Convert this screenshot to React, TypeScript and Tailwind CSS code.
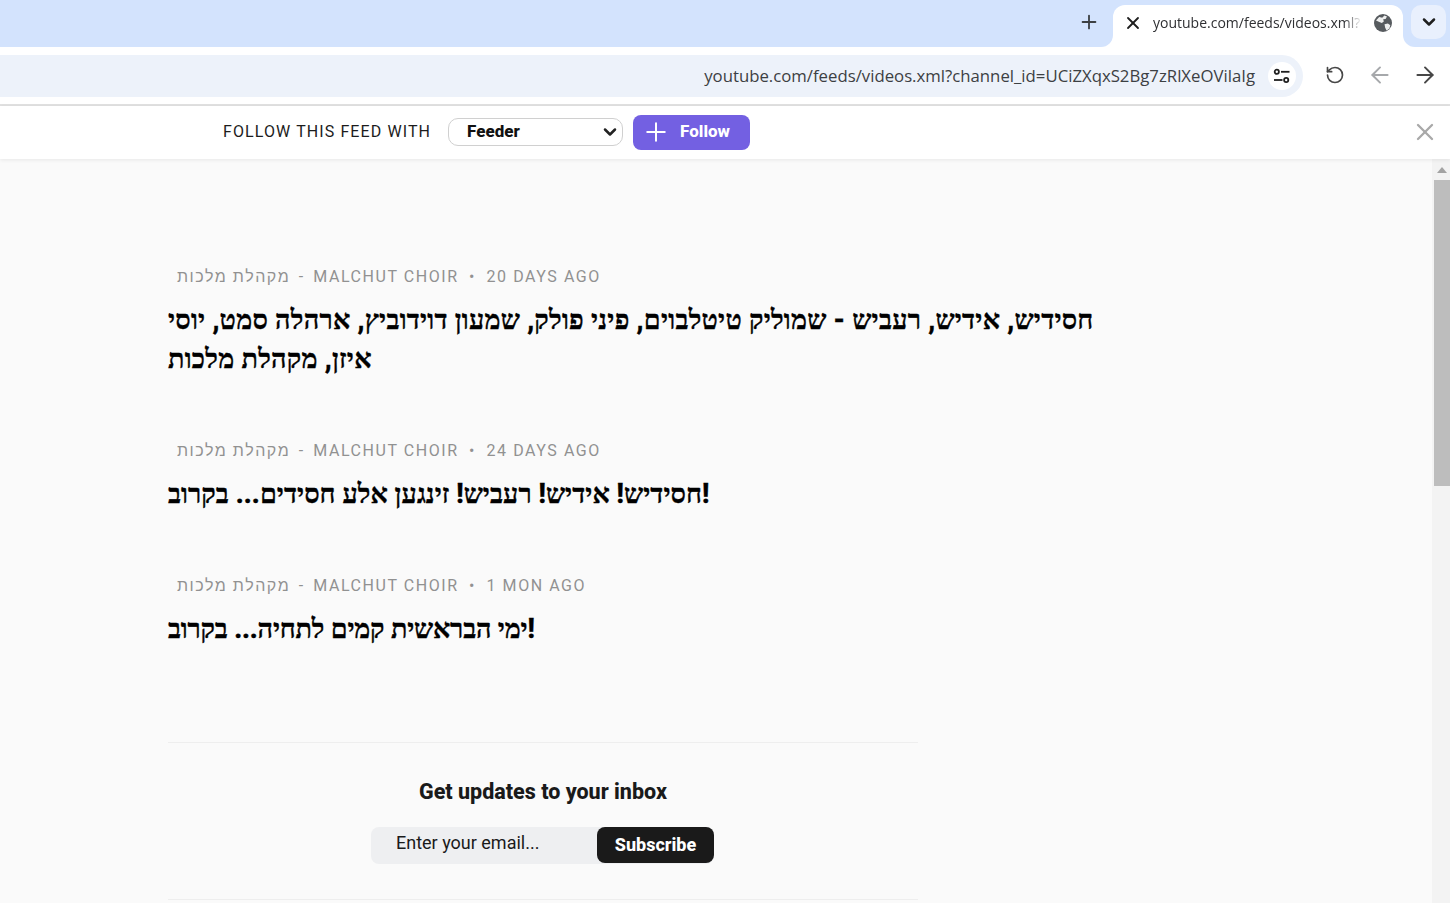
import { ArrowLeft, ArrowRight, ChevronDown, Plus, RotateCcw, X } from "lucide-react";

const ITEMS = [
  {
    age: "20 days ago",
    title:
      "חסידיש, אידיש, רעביש - שמוליק טיטלבוים, פיני פולק, שמעון דוידוביץ, ארהלה סמט, יוסי איזן, מקהלת מלכות",
    gap: "mb-[60px]",
    spacing: "tracking-[0.25px]",
  },
  {
    age: "24 days ago",
    title: "חסידיש! אידיש! רעביש! זינגען אלע חסידים... בקרוב!",
    gap: "mb-[60px]",
    spacing: "tracking-[0.06px]",
  },
  {
    age: "1 mon ago",
    title: "ימי הבראשית קמים לתחיה... בקרוב!",
    gap: "mb-0",
    spacing: "tracking-[-0.2px]",
  },
];

const TuneIcon = () => (
  <svg width="18" height="16" viewBox="0 0 18 16" fill="none" stroke="#1f1f1f" strokeWidth="1.8">
    <circle cx="3.8" cy="3.8" r="2.1" />
    <path d="M8 3.8h8.5" />
    <circle cx="13.2" cy="12" r="2.1" />
    <path d="M1 12h8.5" />
  </svg>
);

const GlobeIcon = () => (
  <svg width="18" height="18" viewBox="0 0 18 18">
    <circle cx="9" cy="9" r="9" fill="#575b5f" />
    <path
      d="M2 6.5l3.2-3.4 3 .6 2.2-2.2 2.6 1-1.4 2.4-2.4.4.6 2.2-2 1.6-3-1.4zM10.5 10.2l3.4-.6 2.4 1.6-1 3.6-2.8 1.6-1.4-2.8z"
      fill="#ffffff"
      opacity="0.9"
    />
  </svg>
);

const ChromeBar = () => (
  <div className="bg-white">
    {/* Tab strip */}
    <div className="flex h-[47px] bg-white">
      <div className="flex flex-1 items-center justify-end rounded-br-xl bg-[#d3e3fd] pb-[3px] pr-[13px]">
        <Plus className="h-[22px] w-[22px] text-[#3c4043]" strokeWidth={2} />
      </div>
      <div className="w-[290px] bg-[#d3e3fd] pt-[5px]">
        <div className="flex h-[42px] items-center rounded-t-xl bg-white pb-[7px] pl-[10px]">
          <X className="h-[20px] w-[20px] text-[#1f1f1f]" strokeWidth={2.2} />
          <span className="ml-[10px] w-[209px] overflow-hidden whitespace-nowrap font-['Open_Sans',sans-serif] text-[14px] text-[#2f3033] [mask-image:linear-gradient(to_left,transparent,black_18px)]">
            youtube.com/feeds/videos.xml?
          </span>
          <span className="ml-[12px]">
            <GlobeIcon />
          </span>
        </div>
      </div>
      <div className="flex w-[47px] rounded-bl-xl bg-[#d3e3fd] pl-[8px] pt-[5px]">
        <div className="flex h-[34px] w-[35px] items-center justify-center rounded-[10px] bg-[#e9f0fd]">
          <ChevronDown className="h-[20px] w-[20px] text-[#1f1f1f]" strokeWidth={3} />
        </div>
      </div>
    </div>

    {/* Toolbar */}
    <div className="flex h-[57px] items-start pt-[8px]">
      <div className="flex h-[42px] w-[1303px] items-center justify-end rounded-r-full bg-[#edf2fa] pr-[7px]">
        <span className="whitespace-nowrap font-['Open_Sans',sans-serif] text-[16.75px] text-[#3c4043]">
          youtube.com/feeds/videos.xml?channel_id=UCiZXqxS2Bg7zRlXeOVilaIg
        </span>
        <span className="ml-[13px] flex h-[28px] w-[28px] items-center justify-center rounded-full bg-white">
          <TuneIcon />
        </span>
      </div>
      <div className="flex h-[42px] flex-1 items-center justify-between pb-[2px] pl-[22px] pr-[12px]">
        <RotateCcw className="h-[20px] w-[20px] text-[#474747]" strokeWidth={2} />
        <ArrowLeft className="ml-[2px] h-[26px] w-[26px] text-[#a6a8ab]" strokeWidth={1.8} />
        <ArrowRight className="h-[26px] w-[26px] text-[#474747]" strokeWidth={1.8} />
      </div>
    </div>
    <div className="h-[2px] bg-[#e1e1e1]" />
  </div>
);

const FollowBar = () => (
  <div className="relative z-10 flex h-[53px] items-center justify-between bg-white pl-[223px] pr-[11px] shadow-[0_1px_4px_rgba(0,0,0,0.08)]">
    <div className="flex items-center">
      <span className="mb-[2px] font-['Roboto',sans-serif] text-[16px] tracking-[1.1px] text-[#1c1c1c]">
        FOLLOW THIS FEED WITH
      </span>
      <div className="mb-[2px] ml-[17px] flex h-[28px] w-[175px] items-center justify-between rounded-[10px] border border-[#d0d0d0] bg-white pl-[18px] pr-[2px]">
        <span className="font-['Roboto',sans-serif] text-[17px] font-extrabold text-[#111111]">Feeder</span>
        <ChevronDown className="h-[20px] w-[20px] text-[#222222]" strokeWidth={3} />
      </div>
      <button
        type="button"
        className="ml-[10px] flex h-[35px] w-[117px] items-center rounded-lg bg-[#7360e2] pb-[2px] pl-[8px] font-['Roboto',sans-serif] text-[17px] font-extrabold text-white"
      >
        <Plus className="h-[30px] w-[30px]" strokeWidth={1.6} />
        <span className="ml-[9px]">Follow</span>
      </button>
    </div>
    <X className="mb-[2px] h-[28px] w-[28px] text-[#a9a9a9]" strokeWidth={2} />
  </div>
);

const FeedItem = ({
  age,
  title,
  gap,
  spacing,
}: {
  age: string;
  title: string;
  gap: string;
  spacing: string;
}) => (
  <article className={gap}>
    <div className="whitespace-nowrap pl-[9px] font-['Roboto','Liberation_Sans',sans-serif] text-[16px] uppercase leading-[24px] tracking-[1.55px] text-[#919191]">
      מקהלת מלכות <span className="mx-[3px]">-</span> Malchut Choir <span className="mx-[5px]">•</span> {age}
    </div>
    <h2
      className={`mt-[12px] w-[950px] font-['Roboto','Liberation_Serif',serif] text-[27px] font-extrabold leading-[39px] text-black [-webkit-text-stroke:0.35px_#000] ${spacing}`}
    >
      {title}
    </h2>
  </article>
);

export default function App() {
  return (
    <div className="flex h-[903px] w-[1450px] flex-col overflow-hidden bg-[#fafafa]">
      <ChromeBar />
      <FollowBar />
      <div className="flex min-h-0 flex-1">
        <main className="flex-1 pl-[168px] pt-[106px]">
          {ITEMS.map((item) => (
            <FeedItem key={item.age} {...item} />
          ))}

          <div className="mt-[93px] w-[750px] border-y border-[#eeeeee] pb-[35px] pt-[36px]">
            <p className="text-center font-['Roboto',sans-serif] text-[21.5px] font-extrabold leading-[26px] text-[#1a1a1a]">
              Get updates to your inbox
            </p>
            <div className="ml-[203px] mt-[22px] flex h-[37px] w-[343px] items-start rounded-lg bg-[#eeeff1]">
              <span className="flex-1 pl-[25px] pt-[3px] font-['Roboto',sans-serif] text-[18px] leading-[26px] text-[#1a1a1a]">
                Enter your email...
              </span>
              <button
                type="button"
                className="h-[36px] w-[117px] rounded-lg bg-[#1a1a1a] pb-[2px] font-['Roboto',sans-serif] text-[18px] font-extrabold text-white"
              >
                Subscribe
              </button>
            </div>
          </div>
        </main>

        {/* Scrollbar */}
        <div className="w-[18px] bg-[#f3f3f3] pl-[2px]">
          <div className="flex h-[21px] items-center justify-center">
            <svg width="10" height="6" viewBox="0 0 10 6">
              <path d="M5 0l5 6H0z" fill="#a3a3a3" />
            </svg>
          </div>
          <div className="h-[306px] bg-[#bdbdbd]" />
        </div>
      </div>
    </div>
  );
}
